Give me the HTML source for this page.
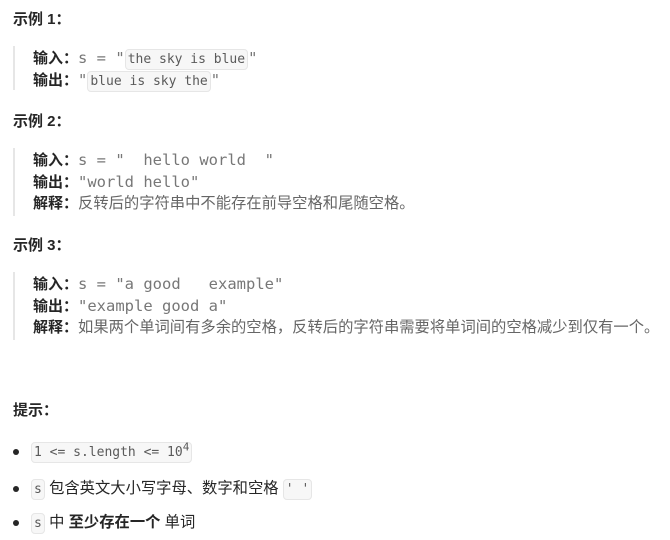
<!DOCTYPE html>
<html><head><meta charset="utf-8"><style>
body{margin:0;width:670px;height:540px;background:#fff;font-family:"Liberation Sans","Noto Sans CJK SC",sans-serif;font-size:15px;color:#262626;position:relative;overflow:hidden}
.a{position:absolute;white-space:pre;line-height:22px}
h{font-weight:bold;position:absolute;white-space:pre;left:13px;line-height:22px;font-size:15px}
.bar{position:absolute;left:13px;width:2px;background:#e6e6e6}
b{font-weight:bold;color:#262626}
.m{font-family:"DejaVu Sans Mono",monospace;font-size:15.5px;color:#777}
.t{color:#666;font-size:15.3px}
code{font-family:"DejaVu Sans Mono",monospace;font-size:13px;color:#5a5a5a;background:#f7f7f7;border:1px solid #e6e6e6;border-radius:4px;padding:2px 2px}
.dot{position:absolute;left:13px;width:6px;height:6px;border-radius:50%;background:#262626}
.h{font-size:15.3px}
</style></head><body>
<h style="top:9px">示例 1：</h>
<div class="bar" style="top:46px;height:44px"></div>
<div class="a" style="left:33px;top:47px"><b>输入：</b><span class="m">s = "</span><code>the sky is blue</code><span class="m">"</span></div>
<div class="a" style="left:33px;top:69px"><b>输出：</b><span class="m">"</span><code>blue is sky the</code><span class="m">"</span></div>

<h style="top:111px">示例 2：</h>
<div class="bar" style="top:148px;height:68px"></div>
<div class="a" style="left:33px;top:149px"><b>输入：</b><span class="m">s = "  hello world  "</span></div>
<div class="a" style="left:33px;top:171px"><b>输出：</b><span class="m">"world hello"</span></div>
<div class="a" style="left:33px;top:193px"><b>解释：</b><span class="t">反转后的字符串中不能存在前导空格和尾随空格。</span></div>

<h style="top:235px">示例 3：</h>
<div class="bar" style="top:272px;height:68px"></div>
<div class="a" style="left:33px;top:273px"><b>输入：</b><span class="m">s = "a good   example"</span></div>
<div class="a" style="left:33px;top:295px"><b>输出：</b><span class="m">"example good a"</span></div>
<div class="a" style="left:33px;top:317px"><b>解释：</b><span class="t">如果两个单词间有多余的空格，反转后的字符串需要将单词间的空格减少到仅有一个。</span></div>

<h style="top:400px">提示：</h>
<div class="dot" style="top:449px"></div>
<div class="a" style="left:31px;top:441px"><code>1 &lt;= s.length &lt;= 10<sup style="font-size:11px;line-height:0">4</sup></code></div>
<div class="dot" style="top:486px"></div>
<div class="a h" style="left:31px;top:478px"><code>s</code> 包含英文大小写字母、数字和空格 <code>' '</code></div>
<div class="dot" style="top:520px"></div>
<div class="a h" style="left:31px;top:512px"><code>s</code> 中 <b>至少存在一个</b> 单词</div>
</body></html>
